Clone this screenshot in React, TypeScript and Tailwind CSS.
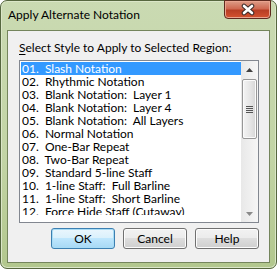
import React from 'react';

const items = [
  '01.  Slash Notation',
  '02.  Rhythmic Notation',
  '03.  Blank Notation:  Layer 1',
  '04.  Blank Notation:  Layer 4',
  '05.  Blank Notation:  All Layers',
  '06.  Normal Notation',
  '07.  One-Bar Repeat',
  '08.  Two-Bar Repeat',
  '09.  Standard 5-line Staff',
  '10.  1-line Staff:  Full Barline',
  '11.  1-line Staff:  Short Barline',
  '12.  Force Hide Staff (Cutaway)',
];

const font = { fontFamily: 'Lato, "Noto Sans", sans-serif' };

const Button: React.FC<{ label: string; primary?: boolean }> = ({ label, primary }) => (
  <div
    className={`w-[64px] h-[21px] rounded-[3px] border flex items-center justify-center text-[12px] text-black ${
      primary
        ? 'border-[#3c7fb1] shadow-[inset_0_0_0_1px_#a8dcf5] bg-[linear-gradient(#eaf6fd_0%,#d9f0fc_50%,#bee6fd_50%,#a7d9f5_100%)]'
        : 'border-[#707070] shadow-[inset_0_0_0_1px_#fcfcfc] bg-[linear-gradient(#f2f2f2_0%,#ebebeb_50%,#dddddd_50%,#cfcfcf_100%)]'
    }`}
  >
    {label}
  </div>
);

const ScrollBar: React.FC = () => (
  <div className="w-[17px] h-full flex flex-col bg-[linear-gradient(90deg,#e8e8e8,#f6f6f6)]">
    <div className="h-[17px] flex items-center justify-center">
      <svg width="7" height="4" viewBox="0 0 7 4">
        <path d="M0 4 L3.5 0 L7 4 Z" fill="#404040" />
      </svg>
    </div>
    <div className="h-[1px]" />
    <div className="mx-[1px] h-[60px] rounded-[2px] border border-[#979797] bg-[linear-gradient(90deg,#f4f4f4,#e4e4e4_60%,#d6d6d6)] shadow-[inset_0_0_0_1px_#fbfbfb] flex flex-col items-center justify-center gap-[1px]">
      <div className="w-[7px] h-[1px] bg-[#555]" />
      <div className="w-[7px] h-[1px] bg-[#555]" />
      <div className="w-[7px] h-[1px] bg-[#555]" />
      <div className="w-[7px] h-[1px] bg-[#555]" />
    </div>
    <div className="flex-1" />
    <div className="h-[17px] flex items-center justify-center">
      <svg width="7" height="4" viewBox="0 0 7 4">
        <path d="M0 0 L3.5 4 L7 0 Z" fill="#8a8a8a" />
      </svg>
    </div>
  </div>
);

export default function App() {
  return (
    <div className="w-[277px] h-[269px] bg-white" style={font}>
      <div className="w-full h-full rounded-[7px] border border-[#56673f] shadow-[inset_0_0_0_1px_#dbe6c8] bg-[linear-gradient(#cadab2,#c2d4a5_60%,#b2c78d)] flex flex-col">
        <div className="h-[29px] flex items-start justify-between pl-[7px] pr-[5px]">
          <div className="pt-[6px] text-[12px] leading-[16px] text-black">Apply Alternate Notation</div>
          <div className="w-[47px] h-[19px] -mt-[1px] rounded-b-[4px] border border-[#5e2a1f] shadow-[inset_0_0_0_1px_#e9a48f] bg-[linear-gradient(#dd9c88_0%,#cf6a52_45%,#b83e24_55%,#d4522f_100%)] flex items-center justify-center">
            <svg width="16" height="13" viewBox="0 0 16 13">
              <path d="M4 3 L12 10 M12 3 L4 10" stroke="#3b2a28" strokeWidth="4.6" strokeLinecap="round" />
              <path d="M4 3 L12 10 M12 3 L4 10" stroke="#ffffff" strokeWidth="2.6" strokeLinecap="round" />
            </svg>
          </div>
        </div>
        <div className="flex-1 mx-[6px] mb-[5px] border border-[#74855c] bg-[#f0f0f0] flex flex-col pl-[11px] pr-[10px] pt-[9px]">
          <div className="h-[16px] text-[12px] leading-[16px] text-black mb-[4px]">
            <span className="underline underline-offset-2">S</span>elect Style to Apply to Selected Region:
          </div>
          <div className="h-[163px] border border-[#828790] bg-white flex">
            <div className="flex-1">
              <div className="h-[154px] overflow-hidden pt-[1px] pl-[1px]">
                {items.map((t, i) => (
                  <div
                    key={t}
                    className={`h-[13px] leading-[13px] text-[12px] whitespace-pre pl-[1px] ${
                      i === 0 ? 'bg-[#3399ff] text-white' : 'text-black'
                    }`}
                  >
                    {t}
                  </div>
                ))}
              </div>
            </div>
            <ScrollBar />
          </div>
          <div className="mt-[5px] flex justify-end gap-[8px]">
            <Button label="OK" primary />
            <Button label="Cancel" />
            <Button label="Help" />
          </div>
        </div>
      </div>
    </div>
  );
}
